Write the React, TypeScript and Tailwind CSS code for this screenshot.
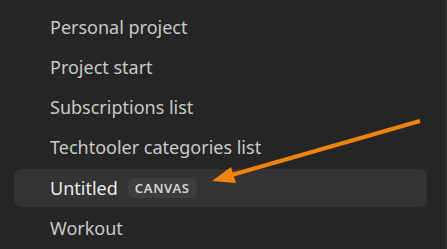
import { FC } from "react";

const items = [
	"Personal project",
	"Project start",
	"Subscriptions list",
	"Techtooler categories list",
	"Untitled",
	"Workout",
];

const App: FC = () => {
	return (
		<div
			className="relative w-[447px] h-[249px] overflow-hidden bg-[#252525] flex"
			style={{ fontFamily: '"Noto Sans", "Segoe UI", sans-serif' }}
		>
			<div className="flex-1 flex flex-col gap-[2.33px] pt-[8px] pl-[14px] pr-[18px]">
				{items.map(name => {
					const active = name === "Untitled";
					return (
						<div
							key={name}
							className={`h-[38px] shrink-0 flex items-center gap-[10px] pl-[36px] rounded-[7px] text-[18px] ${
								active ? "bg-[#333333] text-[#ececec]" : "text-[#c9c9c9]"
							}`}
						>
							<span>{name}</span>
							{active && (
								<span className="h-[20px] px-[7px] flex items-center rounded-[6px] bg-[#3d3d3d] text-[#d4d4d4] text-[13px] font-semibold tracking-[0.05em]">
									CANVAS
								</span>
							)}
						</div>
					);
				})}
			</div>
			<div className="w-px bg-[#353535] mr-[1px]" />

			{/* annotation arrow pointing at the active row */}
			<svg className="absolute inset-0 pointer-events-none" width="447" height="249" viewBox="0 0 447 249">
				<line x1="420" y1="121" x2="228" y2="176" stroke="#f0820e" strokeWidth="4" strokeLinecap="butt" />
				<polygon points="212,181 231,167 236,183" fill="#f0820e" />
			</svg>
		</div>
	);
};

export default App;
